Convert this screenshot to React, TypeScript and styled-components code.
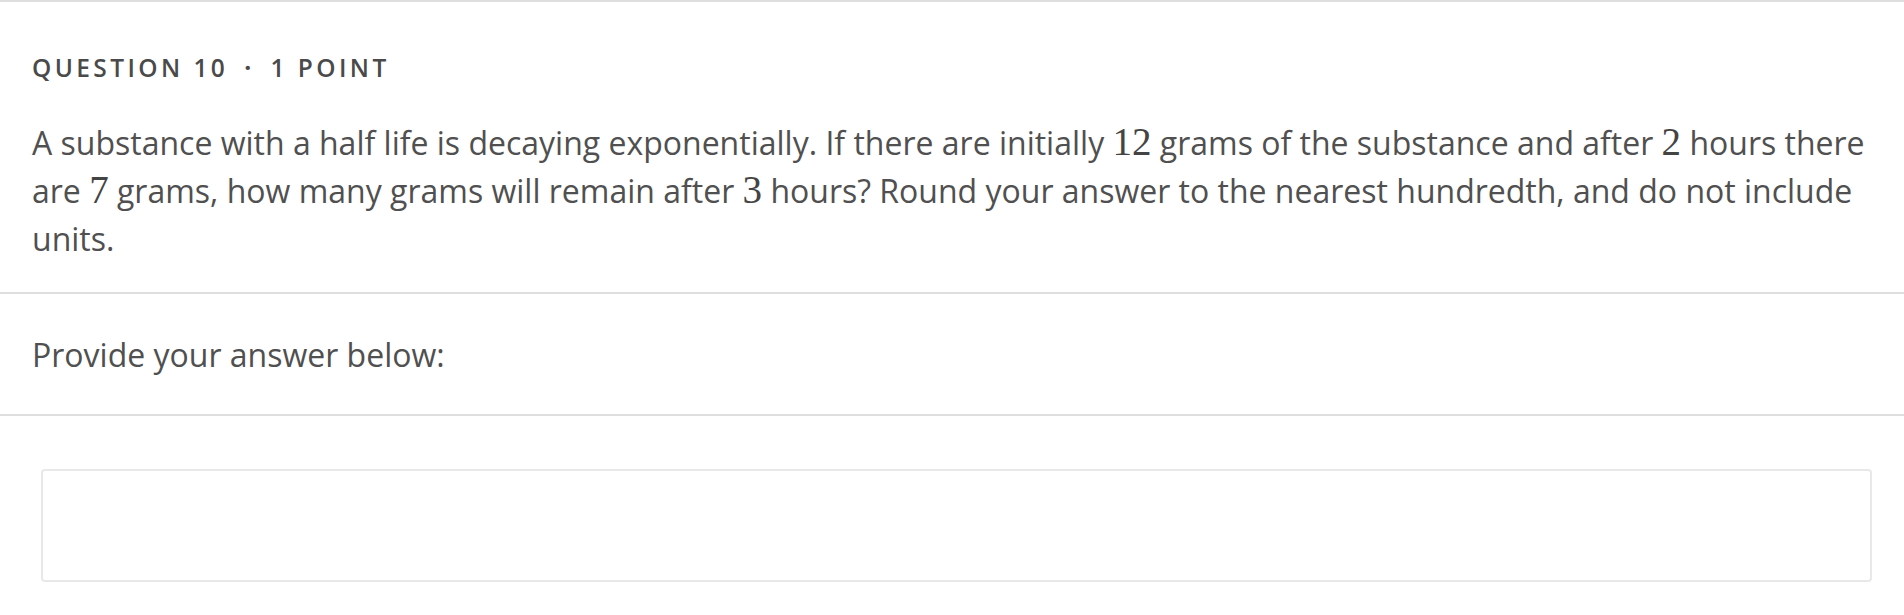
import React, { FC } from 'react';
import styled, { createGlobalStyle } from 'styled-components';

const GlobalStyle = createGlobalStyle`
  html, body {
    margin: 0;
    padding: 0;
    background: #fff;
  }
  body {
    font-family: 'Open Sans', 'Noto Sans', sans-serif;
    color: #505050;
  }
`;

const Page = styled.div`
  width: 100%;
  border-top: 2px solid #dedede;
`;

const Section = styled.section`
  padding: 0 32px;
  border-bottom: 2px solid #dedede;
`;

const QuestionSection = styled(Section)`
  padding-top: 49px;
  padding-bottom: 29px;
`;

const Eyebrow = styled.div`
  display: flex;
  align-items: center;
  gap: 16px;
  font-size: 24.5px;
  font-weight: 600;
  letter-spacing: 3.4px;
  line-height: 34px;
  color: #4a4a4a;
  text-transform: uppercase;
`;

const Dot = styled.span`
  font-weight: 700;
`;

const Prompt = styled.p`
  margin: 34px 0 0;
  font-size: 32px;
  line-height: 48px;
  color: #505050;
`;

const MathNum = styled.span`
  font-family: 'Liberation Serif', 'DejaVu Serif', serif;
  font-size: 39px;
  line-height: 1;
  color: #444;
`;

const PromptSection = styled(Section)`
  display: flex;
  align-items: center;
  height: 120px;
`;

const Label = styled.p`
  margin: 0;
  font-size: 32px;
  color: #505050;
`;

const AnswerWrap = styled.div`
  padding: 53px 32px 30px 41px;
`;

const AnswerBox = styled.textarea`
  display: block;
  width: 100%;
  height: 113px;
  box-sizing: border-box;
  border: 2px solid #e8e8e8;
  border-radius: 4px;
  resize: none;
  outline: none;
  font-family: inherit;
  font-size: 24px;
  padding: 12px;
`;

const App: FC = () => (
  <>
    <GlobalStyle />
    <Page>
      <QuestionSection>
        <Eyebrow>
          <span>Question 10</span>
          <Dot>·</Dot>
          <span>1 point</span>
        </Eyebrow>
        <Prompt>
          A substance with a half life is decaying exponentially. If there are initially <MathNum>12</MathNum> grams of
          the substance and after <MathNum>2</MathNum> hours there are <MathNum>7</MathNum> grams, how many grams will
          remain after <MathNum>3</MathNum> hours? Round your answer to the nearest hundredth, and do not include units.
        </Prompt>
      </QuestionSection>
      <PromptSection>
        <Label>Provide your answer below:</Label>
      </PromptSection>
      <AnswerWrap>
        <AnswerBox aria-label="Answer" />
      </AnswerWrap>
    </Page>
  </>
);

export default App;
